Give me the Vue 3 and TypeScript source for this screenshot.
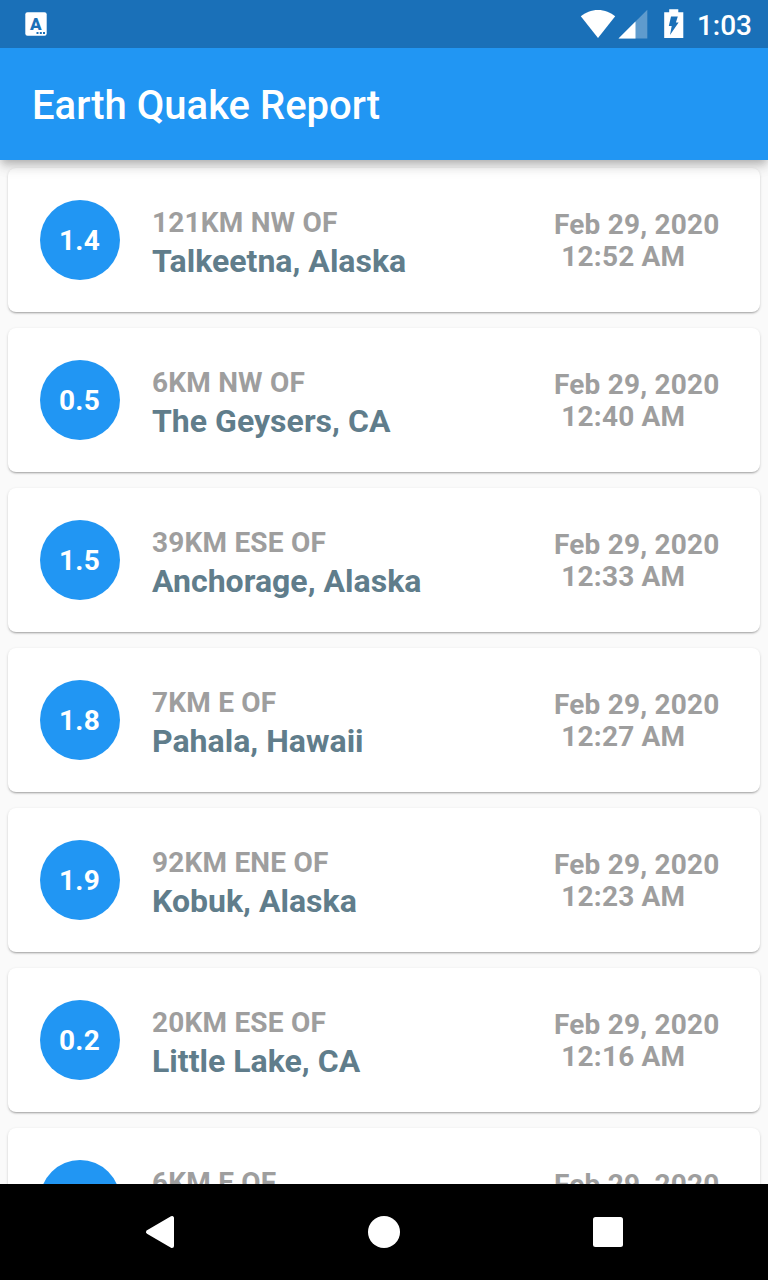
<script setup lang="ts">
interface Quake {
  magnitude: string
  offset: string
  place: string
  date: string
  time: string
}

const date = 'Feb 29, 2020'

const quakes: Quake[] = [
  { magnitude: '1.4', offset: '121KM NW OF', place: 'Talkeetna, Alaska', date, time: '12:52 AM' },
  { magnitude: '0.5', offset: '6KM NW OF', place: 'The Geysers, CA', date, time: '12:40 AM' },
  { magnitude: '1.5', offset: '39KM ESE OF', place: 'Anchorage, Alaska', date, time: '12:33 AM' },
  { magnitude: '1.8', offset: '7KM E OF', place: 'Pahala, Hawaii', date, time: '12:27 AM' },
  { magnitude: '1.9', offset: '92KM ENE OF', place: 'Kobuk, Alaska', date, time: '12:23 AM' },
  { magnitude: '0.2', offset: '20KM ESE OF', place: 'Little Lake, CA', date, time: '12:16 AM' },
  { magnitude: '', offset: '6KM E OF', place: '', date, time: '' },
]
</script>

<template>
  <div class="screen">
    <div class="status">
      <svg class="notice" width="22" height="24" viewBox="0 0 22 24">
        <rect x="0.3" y="0.3" width="21.4" height="23.4" rx="2.2" fill="#fff" />
        <text x="10.8" y="17.5" text-anchor="middle" class="notice-letter">A</text>
        <path d="M11.5 20h2v2h-2zM14.8 20h2v2h-2zM18 20h2v2h-2z" fill="#1a70b8" />
      </svg>
      <div class="indicators">
        <svg width="36" height="30" viewBox="0 0 36 30">
          <path d="M18 29 0.8 7.3C5.2 3.5 11.4 1 18 1s12.8 2.5 17.2 6.3z" fill="#fff" />
        </svg>
        <svg class="signal" width="30" height="30" viewBox="0 0 30 30">
          <path d="M0.5 29.5 29.3 0.7v28.8z" fill="#fff" fill-opacity="0.3" />
          <path d="M0.5 29.5 17.5 12.5v17z" fill="#fff" />
        </svg>
        <svg class="battery" width="20" height="30" viewBox="0 0 20 30">
          <path d="M5.2 0.2h9.1v3H19.3v25.8H0.2V3.2h5z" fill="#fff" />
          <path d="M7 7.6h6.8l-1.9 6h2.7L6 26l1.7-9.1H4.8z" fill="#1a70b8" />
        </svg>
        <span class="clock">1:03</span>
      </div>
    </div>
    <header class="appbar"><h1>Earth Quake Report</h1></header>
    <main class="list">
      <article v-for="(q, i) in quakes" :key="i" class="card">
        <div class="circle">{{ q.magnitude }}</div>
        <div class="where">
          <div class="offset">{{ q.offset }}</div>
          <div class="place">{{ q.place }}</div>
        </div>
        <div class="when">
          <div>{{ q.date }}</div>
          <div class="time">{{ q.time }}</div>
        </div>
      </article>
    </main>
    <nav class="navbar">
      <svg width="32" height="34" viewBox="0 0 32 34">
        <path d="M4 17 28 3v28z" fill="#fff" stroke="#fff" stroke-width="4" stroke-linejoin="round" />
      </svg>
      <svg width="32" height="32" viewBox="0 0 32 32"><circle cx="16" cy="16" r="16" fill="#fff" /></svg>
      <svg width="32" height="32" viewBox="0 0 32 32">
        <rect x="1" y="1" width="30" height="30" rx="2.5" fill="#fff" />
      </svg>
    </nav>
  </div>
</template>

<style>
body {
  margin: 0;
  overflow: hidden;
}
</style>

<style scoped>
.screen {
  width: 768px;
  height: 1280px;
  display: flex;
  flex-direction: column;
  overflow: hidden;
  background: #fafafa;
  font-family: Roboto, sans-serif;
}
svg {
  display: block;
  flex: none;
}
.status {
  flex: none;
  z-index: 2;
  height: 48px;
  box-sizing: border-box;
  padding: 0 16px 0 25px;
  display: flex;
  align-items: center;
  justify-content: space-between;
  background: #1a70b8;
}
.notice-letter {
  font: 900 17px Roboto, sans-serif;
  fill: #1a70b8;
}
.indicators {
  display: flex;
  align-items: center;
}
.signal {
  margin-left: 2px;
}
.battery {
  margin-left: 16px;
}
.clock {
  margin-left: 13px;
  padding-top: 4px;
  font-size: 28px;
  line-height: 32px;
  font-weight: 500;
  color: #fff;
}
.appbar {
  flex: none;
  height: 112px;
  box-sizing: border-box;
  padding: 4px 0 0 32px;
  display: flex;
  align-items: center;
  background: #2196f3;
  box-shadow: 0 4px 8px -2px rgba(0, 0, 0, 0.2), 0 8px 10px rgba(0, 0, 0, 0.1), 0 2px 20px rgba(0, 0, 0, 0.08);
  z-index: 1;
}
h1 {
  margin: 0;
  font-size: 40px;
  line-height: 48px;
  font-weight: 500;
  color: #fff;
}
.list {
  flex: 1;
  min-height: 0;
  overflow: hidden;
  padding: 8px 8px 0;
  display: flex;
  flex-direction: column;
  gap: 16px;
}
.card {
  flex: none;
  height: 144px;
  box-sizing: border-box;
  padding: 0 32px;
  display: flex;
  align-items: center;
  background: #fff;
  border-radius: 8px;
  box-shadow: 0 2px 2px -1px rgba(0, 0, 0, 0.25), 0 1px 3px rgba(0, 0, 0, 0.16);
  font-size: 28px;
  font-weight: 700;
  letter-spacing: 0.2px;
  color: #9e9e9e;
}
.circle {
  flex: none;
  box-sizing: border-box;
  width: 80px;
  height: 80px;
  padding-right: 1px;
  line-height: 82px;
  border-radius: 50%;
  background: #2196f3;
  color: #fff;
  text-align: center;
  letter-spacing: 0.3px;
}
.where {
  flex: 1;
  margin: 2px 0 0 32px;
}
.offset {
  height: 40px;
  line-height: 42px;
}
.place {
  height: 38px;
  font-size: 32px;
  line-height: 38px;
  letter-spacing: 0.02px;
  color: #607d8b;
}
.when {
  width: 174px;
  margin-top: 2px;
  line-height: 32px;
  white-space: nowrap;
}
.time {
  height: 32px;
  padding-left: 7.3px;
}
.navbar {
  flex: none;
  height: 96px;
  box-sizing: border-box;
  padding: 0 144px;
  display: flex;
  align-items: center;
  justify-content: space-between;
  background: #000;
}
</style>
